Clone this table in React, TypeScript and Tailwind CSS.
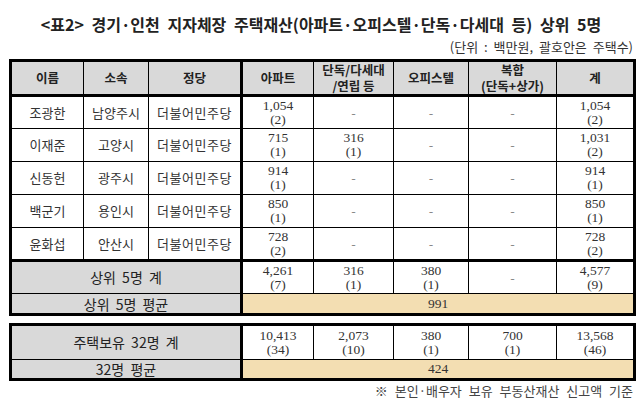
const KR = "font-['Noto_Sans_CJK_KR',sans-serif]";
const NUM = "font-['Liberation_Serif','Noto_Sans_CJK_KR',serif]";

type Cell = [string, string] | null;

const people: { name: string; area: string; party: string; vals: Cell[] }[] = [
  { name: "조광한", area: "남양주시", party: "더불어민주당", vals: [["1,054", "(2)"], null, null, null, ["1,054", "(2)"]] },
  { name: "이재준", area: "고양시", party: "더불어민주당", vals: [["715", "(1)"], ["316", "(1)"], null, null, ["1,031", "(2)"]] },
  { name: "신동헌", area: "광주시", party: "더불어민주당", vals: [["914", "(1)"], null, null, null, ["914", "(1)"]] },
  { name: "백군기", area: "용인시", party: "더불어민주당", vals: [["850", "(1)"], null, null, null, ["850", "(1)"]] },
  { name: "윤화섭", area: "안산시", party: "더불어민주당", vals: [["728", "(2)"], null, null, null, ["728", "(2)"]] },
];

const top5: Cell[] = [["4,261", "(7)"], ["316", "(1)"], ["380", "(1)"], null, ["4,577", "(9)"]];
const all32: Cell[] = [["10,413", "(34)"], ["2,073", "(10)"], ["380", "(1)"], ["700", "(1)"], ["13,568", "(46)"]];

function Val({ v }: { v: Cell }) {
  if (!v) return <span className="text-[#888]">-</span>;
  return (
    <div className={`${NUM} text-[13.5px] leading-[14px] text-[#333]`}>
      <div>{v[0]}</div>
      <div>{v[1]}</div>
    </div>
  );
}

function Cols() {
  return (
    <colgroup>
      <col className="w-[73px]" />
      <col className="w-[65px]" />
      <col className="w-[93px]" />
      <col className="w-[72px]" />
      <col className="w-[80px]" />
      <col className="w-[75px]" />
      <col className="w-[88px]" />
      <col className="w-[78px]" />
    </colgroup>
  );
}

const td = "border border-black text-center align-middle p-0";

export default function App() {
  return (
    <div className={`w-[641px] h-[407px] bg-white ${KR} overflow-hidden`}>
      <div className="pt-[14px] pl-[9px] w-[633px]">
        <h1 className="text-center text-[16px] leading-[20px] font-bold text-[#222] [word-spacing:4px]">
          &lt;표2&gt; 경기·인천 지자체장 주택재산(아파트·오피스텔·단독·다세대 등) 상위 5명
        </h1>
        <p className="mt-[5px] text-right text-[13px] leading-[16px] text-[#333] [word-spacing:3px]">
          (단위 : 백만원, 괄호안은 주택수)
        </p>

        <table className="mt-[4px] w-[624px] table-fixed border-collapse border-[3px] border-black text-[13px] text-[#333]">
          <Cols />
          <thead>
            <tr className="h-[34px] bg-[#d9d9d9] font-bold text-[#222] text-[12.5px] leading-[16px]">
              <th className={`${td} border-b-[3px]`}>이름</th>
              <th className={`${td} border-b-[3px]`}>소속</th>
              <th className={`${td} border-b-[3px] border-r-[3px]`}>정당</th>
              <th className={`${td} border-b-[3px]`}>아파트</th>
              <th className={`${td} border-b-[3px]`}>
                단독/다세대
                <br />
                /연립 등
              </th>
              <th className={`${td} border-b-[3px]`}>오피스텔</th>
              <th className={`${td} border-b-[3px]`}>
                복합
                <br />
                (단독+상가)
              </th>
              <th className={`${td} border-b-[3px]`}>계</th>
            </tr>
          </thead>
          <tbody>
            {people.map((p, i) => {
              const last = i === people.length - 1 ? "border-b-[3px]" : "";
              return (
                <tr key={p.name} className="h-[33px]">
                  <td className={`${td} ${last}`}>{p.name}</td>
                  <td className={`${td} ${last}`}>{p.area}</td>
                  <td className={`${td} ${last} border-r-[3px] tracking-[0.5px]`}>{p.party}</td>
                  {p.vals.map((v, j) => (
                    <td key={j} className={`${td} ${last}`}>
                      <Val v={v} />
                    </td>
                  ))}
                </tr>
              );
            })}
            <tr className="h-[33px]">
              <td colSpan={3} className={`${td} border-r-[3px] bg-[#d9d9d9] text-[#222] text-[14px] [word-spacing:3px]`}>
                상위 5명 계
              </td>
              {top5.map((v, j) => (
                <td key={j} className={td}>
                  <Val v={v} />
                </td>
              ))}
            </tr>
            <tr className="h-[21px] leading-[16px]">
              <td colSpan={3} className={`${td} border-r-[3px] bg-[#d9d9d9] text-[#222] text-[14px] [word-spacing:3px]`}>
                상위 5명 평균
              </td>
              <td colSpan={5} className={`${td} bg-[#f3deb2] ${NUM} text-[13.5px] text-[#333]`}>
                991
              </td>
            </tr>
          </tbody>
        </table>

        <table className="mt-[7px] w-[624px] table-fixed border-collapse border-[3px] border-black text-[13px] text-[#333]">
          <Cols />
          <tbody>
            <tr className="h-[35px]">
              <td colSpan={3} className={`${td} border-r-[3px] bg-[#d9d9d9] text-[#222] text-[14px] [word-spacing:3px]`}>
                주택보유 32명 계
              </td>
              {all32.map((v, j) => (
                <td key={j} className={td}>
                  <Val v={v} />
                </td>
              ))}
            </tr>
            <tr className="h-[20px] leading-[16px]">
              <td colSpan={3} className={`${td} border-r-[3px] bg-[#d9d9d9] text-[#222] text-[14px] [word-spacing:3px]`}>
                32명 평균
              </td>
              <td colSpan={5} className={`${td} bg-[#f3deb2] ${NUM} text-[13.5px] text-[#333]`}>
                424
              </td>
            </tr>
          </tbody>
        </table>

        <p className="mt-[2px] text-right text-[13px] leading-[16px] text-[#444] [word-spacing:4px]">
          ※ 본인·배우자 보유 부동산재산 신고액 기준
        </p>
      </div>
    </div>
  );
}
